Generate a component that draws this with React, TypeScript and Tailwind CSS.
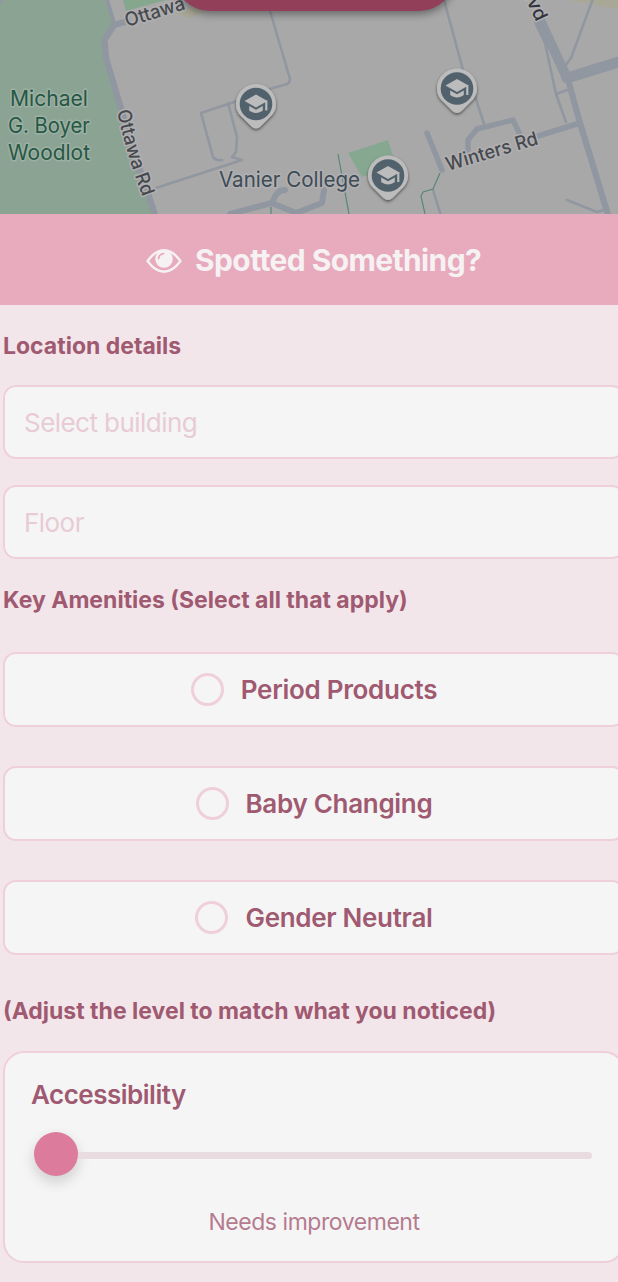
import { useState } from "react"

const amenities = ["Period Products", "Baby Changing", "Gender Neutral"]

const levels = ["Needs improvement", "Okay", "Great"]

interface MapPinProps {
  x: number
  y: number
}

function MapPin({ x, y }: MapPinProps) {
  return (
    <g transform={`translate(${x} ${y})`}>
      <path
        d="M0-20C-11-20-20-11-20 0c0 6 2.500 10 7 14l8.500 8.500c2.800 2.600 6.200 2.600 9 0L13 14c4.500-4 7-8 7-14C20-11 11-20 0-20Z"
        fill="#bcbcbd"
        filter="url(#pinShadow)"
      />
      <circle r="16.300" fill="#52626c" />
      <path d="M-11.500-3 0-9.500 11.500-3 0 3.500Z" fill="#bcbcbd" />
      <path d="M10.300-3.500V6.500" stroke="#bcbcbd" strokeWidth="2.200" />
      <path d="M-6.800 2 0 5.800 6.800 2V6.500C3 9.700-3 9.700-6.800 6.500Z" fill="#bcbcbd" />
    </g>
  )
}

function CampusMap() {
  return (
    <svg className="block h-[214px] w-full" viewBox="0 0 618 214">
      <defs>
        <filter id="pinShadow" x="-30%" y="-30%" width="160%" height="170%">
          <feDropShadow dx="0" dy="1.500" stdDeviation="1.500" floodColor="#000" floodOpacity="0.550" />
        </filter>
        <path id="ottawaRd" d="M117 111C123 139 131 166 144 201" />
      </defs>
      <rect width="618" height="214" fill="#a9a8a9" />

      {/* Parks */}
      <path d="M0 0H106L114 24L105 40V57L155 214H0Z" fill="#8ba393" />
      <path d="M123 0H166L126 11Z" fill="#85a78e" />
      <path d="M174 13 196 5 206 11 190 18Z" fill="#a8a697" />
      <path d="M348 153 388 140 396 166 362 177Z" fill="#86a891" />
      <path d="M568 0H618V9Z" fill="#a9a795" />

      {/* Roads */}
      <g fill="none" stroke="#9197a0" strokeLinejoin="round" strokeLinecap="round">
        <path d="M0 2 2 0" strokeWidth="3" />
        <path d="M106-4 114 23" strokeWidth="4" />
        <path d="M128 21 114 25 104.500 40 106 58 120 105C134 155 143 177 156 218" strokeWidth="6.200" />
        <path d="M268 4 290 79Q290 84 284 85L262 91M240 100 201 113 213 157Q216 161 222 160M228 103 237 137 236 152 232 157 242 160 156 188" strokeWidth="2.600" />
        <path d="M444 0 463 70M475 96 485 127" strokeWidth="2.600" />
        <path d="M230 214 272 203 296 213 322 203 324 190M272 203Q277 189 285 190" strokeWidth="6" />
        <path d="M427 133 442 170" strokeWidth="5.500" />
        <path d="M468 150V140L477 129 513 120 522 139" strokeWidth="5.500" />
        <path d="M538 136 580 123" strokeWidth="5.500" />
        <path d="M540 20 567 78" strokeWidth="10" />
        <path d="M567 78 622 61" strokeWidth="11" />
        <path d="M567 76 580 123 609 218" strokeWidth="6.200" />
        <path d="M535 22 545 43 556 94 566 122M556 94 567 90M594-4 571 58 565 66M433 190 441 216M567 200 597 212 604 210" strokeWidth="2.600" />
      </g>
      <g fill="none" stroke="#56877a" strokeWidth="1.200">
        <path d="M338 154 349 214M440 173 433 189 423 192 421 196 425 214M271 207V214" />
      </g>

      <g
        fontFamily="Inter, sans-serif"
        fontSize="21.500"
        stroke="#b1b0b1"
        strokeWidth="3"
        strokeLinejoin="round"
        paintOrder="stroke"
      >
        <g fill="#275844" stroke="#9db0a4">
          <text x="10" y="105.500" textLength="78" lengthAdjust="spacingAndGlyphs">Michael</text>
          <text x="8" y="133" textLength="82" lengthAdjust="spacingAndGlyphs">G. Boyer</text>
          <text x="8" y="160" textLength="82" lengthAdjust="spacingAndGlyphs">Woodlot</text>
        </g>
        <text x="219" y="186.500" fill="#3d4c57" textLength="141" lengthAdjust="spacingAndGlyphs">Vanier College</text>
        <g fill="#46494e" fontSize="19" fontWeight="500">
          <text transform="translate(127 27) rotate(-17)" textLength="62" lengthAdjust="spacingAndGlyphs">Ottawa</text>
          <text>
            <textPath href="#ottawaRd" textLength="90" lengthAdjust="spacingAndGlyphs">Ottawa Rd</textPath>
          </text>
          <text transform="translate(448 171) rotate(-16.500)" textLength="95" lengthAdjust="spacingAndGlyphs">Winters Rd</text>
          <text transform="translate(519 -15) rotate(65)" fill="#30343d" textLength="41" lengthAdjust="spacingAndGlyphs">Blvd</text>
        </g>
      </g>

      <MapPin x={256} y={104} />
      <MapPin x={457} y={88.500} />
      <MapPin x={388} y={175.500} />
    </svg>
  )
}

function EyeIcon() {
  return (
    <svg className="h-[26px] w-9" viewBox="0 0 36 26" fill="none">
      <path d="M1.500 13C7 5.500 12 2.300 18 2.300S29 5.500 34.500 13C29 20.500 24 23.700 18 23.700S7 20.500 1.500 13Z" stroke="#f6f1f3" strokeWidth="2.400" strokeLinejoin="round" />
      <circle cx="18" cy="11" r="8.800" fill="#f6f1f3" />
      <path d="M12.600 10.500Q13 6.200 17.500 5.700" stroke="#e8aabd" strokeWidth="1.800" strokeLinecap="round" />
    </svg>
  )
}

export default function App() {
  const [selected, setSelected] = useState<string[]>([])
  const [level] = useState(0)

  const toggle = (name: string) => {
    setSelected(selected.includes(name) ? selected.filter((n) => n !== name) : [...selected, name])
  }

  return (
    <div className="h-[1282px] w-full overflow-hidden bg-[#f3e6ea] font-['Inter',sans-serif] text-[#9f5a71]">
      <div className="relative h-[214px] overflow-hidden">
        <CampusMap />
        <div className="absolute -top-[61px] left-[174px] h-[72px] w-[281px] rounded-full bg-[#923f5a] shadow-[0_3px_8px_rgba(0,0,0,0.4)]" />
      </div>

      <header className="flex h-[91px] items-center gap-[13px] bg-[#e8aabd] pl-[146px] pt-[2px] text-[#f6f1f3]">
        <EyeIcon />
        <h1 className="whitespace-nowrap pb-[2px] text-[30px] font-bold leading-none tracking-[-0.6px]">Spotted Something?</h1>
      </header>

      <main className="ml-[3px] w-[622px]">
        <h2 className="flex h-20 items-center whitespace-nowrap pt-[2px] text-[23px] font-bold">Location details</h2>

        <div className="flex flex-col gap-[26px]">
          <input
            className="h-[74px] w-full rounded-[13px] border-2 border-[#efd0da] bg-[#f5f5f5] px-[19px] text-[26px] tracking-[-0.55px] outline-none placeholder:text-[#e8cbd5]"
            placeholder="Select building"
          />
          <input
            className="h-[74px] w-full rounded-[13px] border-2 border-[#efd0da] bg-[#f5f5f5] px-[19px] text-[26px] tracking-[-0.55px] outline-none placeholder:text-[#e8cbd5]"
            placeholder="Floor"
          />
        </div>

        <h2 className="mb-[13px] flex h-20 items-center whitespace-nowrap pt-[2px] text-[23px] font-bold">
          Key Amenities (Select all that apply)
        </h2>

        <div className="flex flex-col gap-[39px]">
          {amenities.map((name) => (
            <button
              key={name}
              onClick={() => toggle(name)}
              className="flex h-[75px] w-full items-center justify-center gap-[17px] rounded-[13px] border-2 border-[#efd0da] bg-[#f5f5f5]"
            >
              <span
                className={`size-[33px] rounded-full border-[3.500px] border-[#efd0da] ${selected.includes(name) ? "bg-[#dc7b9b]" : ""}`}
              />
              <span className="whitespace-nowrap text-[26px] font-semibold tracking-[-0.3px]">{name}</span>
            </button>
          ))}
        </div>

        <h2 className="mt-4 flex h-20 items-center whitespace-nowrap text-[23px] font-bold">
          (Adjust the level to match what you noticed)
        </h2>

        <section className="h-[212px] rounded-[21px] border-2 border-[#efd0da] bg-[#f5f5f5] px-[26px] pt-[25px]">
          <h3 className="text-[26px] font-semibold leading-[34px] tracking-[-0.5px]">Accessibility</h3>
          <div className="ml-[3px] mt-5 flex h-11 w-[558px] items-center">
            <div className="size-11 shrink-0 rounded-full bg-[#dc7b9b] shadow-[0_6px_14px_rgba(0,0,0,0.16)]" />
            <div className="mt-[3px] h-[7px] flex-1 rounded-r-full bg-[#e8dce0]" />
          </div>
          <p className="mt-[29px] text-center text-[23px] leading-[34px] tracking-[-0.45px] text-[#b57b8f]">{levels[level]}</p>
        </section>
      </main>
    </div>
  )
}
